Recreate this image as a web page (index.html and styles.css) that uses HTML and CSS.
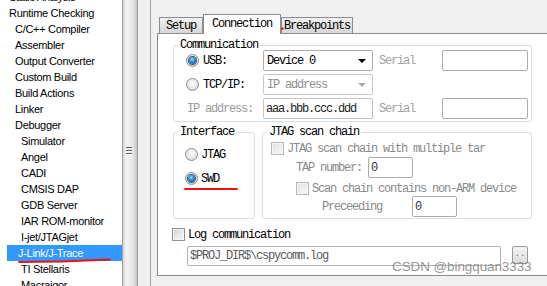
FILE: index.html
```html
<!DOCTYPE html>
<html>
<head>
<meta charset="utf-8">
<link rel="stylesheet" href="styles.css">
</head>
<body>
<div class="tree">
  <div class="tree-inner">
    <div class="it l1">Static Analysis</div>
    <div class="it l1">Runtime Checking</div>
    <div class="it l2">C/C++ Compiler</div>
    <div class="it l2">Assembler</div>
    <div class="it l2">Output Converter</div>
    <div class="it l2">Custom Build</div>
    <div class="it l2">Build Actions</div>
    <div class="it l2">Linker</div>
    <div class="it l2">Debugger</div>
    <div class="it l3">Simulator</div>
    <div class="it l3">Angel</div>
    <div class="it l3">CADI</div>
    <div class="it l3">CMSIS DAP</div>
    <div class="it l3">GDB Server</div>
    <div class="it l3">IAR ROM-monitor</div>
    <div class="it l3">I-jet/JTAGjet</div>
    <div class="it l3 sel">J-Link/J-Trace</div>
    <div class="it l3">TI Stellaris</div>
    <div class="it l3">Macraigor</div>
  </div>
</div>
<div class="splitter"><div class="grip"><i></i><i></i><i></i></div></div>
<div class="right">
  <div class="frame">
    <div class="tabctl">
      <div class="tabs">
        <div class="tab t-setup">Setup</div>
        <div class="tab t-conn active">Connection</div>
        <div class="tab t-bp">Breakpoints</div>
      </div>
      <div class="panel">
        <div class="group comm">
          <div class="legend">Communication</div>
          <div class="row r1">
            <span class="radio on"></span><span class="lbl">USB:</span>
            <div class="combo"><span>Device 0</span><i class="arrow"></i></div>
            <span class="ser">Serial</span><div class="input ser-in"></div>
          </div>
          <div class="row">
            <span class="radio"></span><span class="lbl">TCP/IP:</span>
            <div class="combo dis"><span>IP address</span><i class="arrow"></i></div>
          </div>
          <div class="row">
            <span class="iplbl">IP address:</span>
            <div class="input ip">aaa.bbb.ccc.ddd</div>
            <span class="ser">Serial</span><div class="input ser-in"></div>
          </div>
        </div>
        <div class="groups2">
          <div class="group iface">
            <div class="legend">Interface</div>
            <div class="rrow first"><span class="radio"></span><span class="rl">JTAG</span></div>
            <div class="rrow second"><span class="radio on"></span><span class="rl">SWD</span></div>
          </div>
          <div class="group jtag">
            <div class="legend">JTAG scan chain</div>
            <div class="crow c1"><span class="cb dis"></span><span class="ct">JTAG scan chain with multiple tar</span></div>
            <div class="frow tap"><span class="fl">TAP number:</span><div class="input small">0</div></div>
            <div class="crow c2"><span class="cb dis"></span><span class="ct">Scan chain contains non-ARM device</span></div>
            <div class="frow prec"><span class="fl">Preceeding</span><div class="input small">0</div></div>
          </div>
        </div>
        <div class="logrow"><span class="cb"></span><span class="lt">Log communication</span></div>
        <div class="logfile"><div class="input login">$PROJ_DIR$\cspycomm.log</div><div class="btn">..</div></div>
      </div>
    </div>
  </div>
</div>
<div class="wm">CSDN @bingquan3333</div>
<svg class="marks" width="547" height="286" viewBox="0 0 547 286">
  <path d="M217 32 C238 33.5 262 33.5 283 28.5" />
  <path d="M185 189 L237 189" />
  <path d="M19 262 C50 262 80 261 110 259.5" />
</svg>
</body>
</html>
```

FILE: styles.css
```css
* { box-sizing: border-box; }
html, body { margin: 0; padding: 0; }
body {
  width: 547px;
  height: 286px;
  overflow: hidden;
  position: relative;
  display: flex;
  background: #f0f0f0;
  font-family: "Liberation Mono", "Courier New", monospace;
  font-size: 12px;
  letter-spacing: -1.2px;
  color: #000;
}

/* ---------- tree ---------- */
.tree {
  flex: none;
  width: 123px;
  height: 286px;
  background: #fff;
  border-right: 1px solid #a0a0a0;
  overflow: hidden;
  font-family: "Liberation Sans", Arial, sans-serif;
  font-size: 11px;
  letter-spacing: -0.3px;
  color: #000;
}
.tree-inner { margin-top: -11px; }
.it { height: 16px; line-height: 16px; white-space: nowrap; }
.l1 { padding-left: 9px; }
.l2 { padding-left: 15px; }
.l3 { padding-left: 21px; }
.it.sel {
  margin-left: 7px;
  padding-left: 11px;
  background: #3399ff;
  color: #fff;
}

/* ---------- splitter ---------- */
.splitter {
  flex: none;
  width: 15px;
  height: 286px;
  border-right: 1px solid #9a9a9a;
  background: linear-gradient(to right, #d6d6d6 0, #f4f4f4 25%, #e6e6e6 70%, #c6c6c6 100%);
  display: flex;
  justify-content: center;
  padding-top: 147px;
}
.grip { display: flex; flex-direction: column; gap: 2px; width: 6px; margin-left: -2px; }
.grip i { display: block; height: 1px; background: #5c5c5c; box-shadow: 0 1px 0 #fff; }

/* ---------- right area ---------- */
.right {
  flex: 1;
  height: 286px;
  padding-left: 12px;
  background: #f0f0f0;
}
.frame {
  height: 286px;
  border-left: 1px solid #a0a0a0;
  padding-left: 6px;
}
.tabctl { padding-top: 14px; }
.tabs {
  display: flex;
  align-items: flex-end;
  height: 19px;
  padding-left: 2px;
}
.tab {
  height: 16px;
  line-height: 16px;
  text-align: center;
  border: 1px solid #898c95;
  border-bottom: none;
  background: linear-gradient(#f3f3f3, #e3e3e3 50%, #d7d7d7);
  white-space: nowrap;
}
.t-setup { width: 44px; }
.t-conn { width: 78px; }
.t-bp { width: 72px; }
.tab.active {
  height: 20px;
  margin-bottom: -1px;
  line-height: 18px;
  background: #fff;
  position: relative;
  z-index: 1;
}
.panel {
  width: 400px;
  height: 243px;
  border: 1px solid #898c95;
  background: #fff;
  padding-top: 11px;
}

/* ---------- group boxes ---------- */
.group {
  display: flex;
  flex-direction: column;
  border: 1px solid #d5dfe5;
  border-radius: 3px;
}
.legend {
  align-self: flex-start;
  height: 12px;
  line-height: 12px;
  margin: -7px 0 -5px 4px;
  padding: 0 2px;
  background: #fff;
  white-space: nowrap;
}
.comm {
  margin-left: 15px;
  width: 359px;
  height: 77px;
}
.row {
  display: flex;
  align-items: center;
  flex: none;
  height: 21px;
  margin-top: 3px;
}
.row.r1 { margin-top: 4px; }
.lbl { margin-left: 4px; width: 60px; }
.combo {
  width: 110px;
  height: 21px;
  border: 1px solid #acacac;
  border-radius: 2px;
  display: flex;
  align-items: center;
  padding: 0 6px 0 3px;
  white-space: nowrap;
}
.combo .arrow {
  margin-left: auto;
  width: 0; height: 0;
  border-left: 4px solid transparent;
  border-right: 4px solid transparent;
  border-top: 4px solid #000;
}
.combo.dis { border-color: #c8c8c8; color: #8d8d8d; }
.combo.dis .arrow { border-top-color: #a8a8a8; }
.ser { margin-left: 6px; width: 63px; color: #a0a0a0; }
.input {
  flex: none;
  height: 21px;
  border: 1px solid #acacac;
  border-radius: 2px;
  background: #fff;
  display: flex;
  align-items: center;
  padding-left: 2px;
  white-space: nowrap;
  overflow: hidden;
}
.ser-in { width: 86px; }
.iplbl { margin-left: 13px; width: 76px; color: #9a9a9a; }
.ip { width: 110px; color: #222; border-color: #c4c4c4; }

/* radios / checkboxes */
.radio {
  flex: none;
  width: 13px; height: 13px;
  margin-left: 12px;
  border-radius: 50%;
  border: 1px solid #8e8f8f;
  background: radial-gradient(circle at 50% 40%, #ffffff 0, #ececec 45%, #cdcdcd 100%);
  display: flex;
  align-items: center;
  justify-content: center;
}
.radio.on::after {
  content: "";
  width: 7px; height: 7px;
  border-radius: 50%;
  background: radial-gradient(circle at 45% 35%, #9fe0ff 0, #2a8ad4 45%, #0b3f78 100%);
  box-shadow: 0 0 0 1px #32526e;
}
.cb {
  flex: none;
  width: 13px; height: 13px;
  border: 1px solid #8f8f8f;
  background: linear-gradient(135deg, #d6d6d6, #f7f7f7);
  box-shadow: inset 0 0 0 1px #f4f4f4;
}
.cb.dis { border-color: #b8b8b8; background: linear-gradient(135deg, #e0e0e0, #f8f8f8); }

/* ---------- lower groups ---------- */
.groups2 {
  display: flex;
  margin: 10px 0 0 15px;
}
.iface { width: 82px; height: 87px; }
.rrow { display: flex; align-items: center; flex: none; height: 13px; }
.rrow .radio { margin-left: 11px; }
.rrow.first { margin-top: 15px; }
.rrow.second { margin-top: 11px; }
.rl { margin-left: 3px; }

.jtag { margin-left: 7px; width: 270px; height: 87px; color: #8a8a8a; }
.jtag .legend { color: #000; }
.crow { display: flex; align-items: center; flex: none; height: 13px; white-space: nowrap; }
.crow.c1 { margin-top: 9px; }
.crow.c1 .cb { margin-left: 8px; }
.crow.c2 { margin-top: 4px; }
.crow.c2 .cb { margin-left: 33px; }
.ct { margin-left: 3px; }
.frow { display: flex; align-items: center; flex: none; }
.frow.tap { margin-top: 2px; }
.frow.tap .fl { margin-left: 33px; width: 72px; }
.frow.prec { margin-top: 1px; }
.frow.prec .fl { margin-left: 59px; width: 90px; }
.input.small { width: 45px; height: 21px; color: #333; }

/* ---------- log ---------- */
.logrow { display: flex; align-items: center; height: 13px; margin: 9px 0 0 14px; }
.lt { margin-left: 3px; }
.logfile { display: flex; align-items: flex-start; margin: 5px 0 0 29px; }
.login { width: 314px; height: 20px; color: #5a5a5a; border-color: #b4b4b4; }
.btn {
  margin-left: 11px;
  width: 16px; height: 18px;
  border: 1px solid #9a9a9a;
  border-radius: 2px;
  background: linear-gradient(#f4f4f4, #dcdcdc);
  font-size: 9px;
  letter-spacing: 0;
  line-height: 14px;
  text-align: center;
  color: #777;
}

/* ---------- overlays ---------- */
.wm {
  position: absolute;
  left: 392px;
  top: 259px;
  font-family: "Liberation Sans", Arial, sans-serif;
  font-size: 13.5px;
  letter-spacing: -0.1px;
  color: rgba(128, 128, 128, 0.85);
  white-space: nowrap;
}
.marks {
  position: absolute;
  left: 0; top: 0;
  pointer-events: none;
}
.marks path { fill: none; stroke: #ee1111; stroke-width: 1.8; stroke-linecap: round; }
```
